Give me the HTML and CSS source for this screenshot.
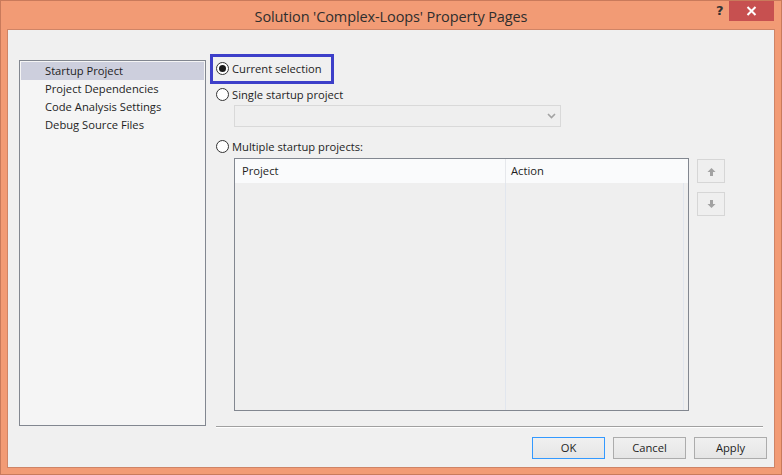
FILE: index.html
```html
<!DOCTYPE html>
<html>
<head>
<meta charset="utf-8">
<link rel="stylesheet" href="styles.css">
</head>
<body>
<div class="window">
  <div class="titlebar">
    <div class="title">Solution 'Complex-Loops' Property Pages</div>
    <div class="help">?</div>
    <div class="close">
      <svg width="11" height="10" viewBox="0 0 11 10"><path d="M1.5 1 L9.5 9 M9.5 1 L1.5 9" stroke="#fff" stroke-width="2"/></svg>
    </div>
  </div>
  <div class="client">
    <div class="listbox">
      <div class="item selected">Startup Project</div>
      <div class="item">Project Dependencies</div>
      <div class="item">Code Analysis Settings</div>
      <div class="item">Debug Source Files</div>
    </div>
    <div class="content">
      <div class="option first">
        <span class="radio checked"><span class="dot"></span></span>
        <span class="label">Current selection</span>
        <span class="focusbox"></span>
      </div>
      <div class="option second">
        <span class="radio"></span>
        <span class="label">Single startup project</span>
      </div>
      <div class="combo">
        <svg class="chev" width="9" height="6" viewBox="0 0 9 6"><path d="M1 1 L4.5 4.5 L8 1" fill="none" stroke="#a3a3a3" stroke-width="1.6"/></svg>
      </div>
      <div class="option third">
        <span class="radio"></span>
        <span class="label">Multiple startup projects:</span>
      </div>
      <div class="gridrow">
        <div class="grid">
          <div class="ghead">
            <div class="gcol c1">Project</div>
            <div class="gcol c2">Action</div>
          </div>
          <div class="gbody">
            <div class="bcol b1"></div>
            <div class="bcol b2"></div>
          </div>
        </div>
        <div class="movers">
          <div class="mbtn">
            <svg width="9" height="9" viewBox="0 0 9 9"><path d="M4.5 1 L8.5 5 L6 5 L6 9 L3 9 L3 5 L0.5 5 Z" fill="#a2a2a2"/></svg>
          </div>
          <div class="mbtn">
            <svg width="9" height="9" viewBox="0 0 9 9"><path d="M4.5 8 L8.5 4 L6 4 L6 0 L3 0 L3 4 L0.5 4 Z" fill="#a2a2a2"/></svg>
          </div>
        </div>
      </div>
      <div class="separator"></div>
      <div class="buttons">
        <div class="btn default">OK</div>
        <div class="btn">Cancel</div>
        <div class="btn">Apply</div>
      </div>
    </div>
  </div>
</div>
</body>
</html>
```
FILE: styles.css
```css
html, body {
  margin: 0;
  padding: 0;
}
body {
  width: 782px;
  height: 475px;
  overflow: hidden;
  font-family: "Open Sans", "Noto Sans", sans-serif;
  font-size: 11.2px;
  color: #1e1e1e;
}
.window {
  box-sizing: border-box;
  width: 782px;
  height: 475px;
  background: #f29b75;
  border: 1px solid #c97a5b;
  padding: 0 6px 6px 6px;
  display: flex;
  flex-direction: column;
}
.titlebar {
  height: 28px;
  position: relative;
  display: flex;
  align-items: center;
  justify-content: center;
}
.title {
  font-size: 14.5px;
  color: #2e2e2e;
  margin-top: 2px;
  letter-spacing: -0.1px;
}
.help {
  position: absolute;
  left: 709px;
  top: 2px;
  font-family: "DejaVu Sans", sans-serif;
  font-weight: bold;
  font-size: 13px;
  color: #333;
}
.close {
  position: absolute;
  left: 722px;
  top: 0;
  width: 45px;
  height: 20px;
  background: #c75050;
  display: flex;
  align-items: center;
  justify-content: center;
}
.close svg { display: block; }
.client {
  flex: 1;
  background: #f0f0f0;
  border: 1px solid #cf8466;
  display: flex;
  padding: 30px 0 0 11px;
}
.listbox {
  box-sizing: border-box;
  width: 187px;
  height: 366px;
  border: 1px solid #828790;
  background: #f5f5f5;
  padding: 1px;
}
.item {
  height: 18px;
  line-height: 18px;
  padding-left: 24px;
}
.item.selected {
  background: #cdcfdd;
}
.content {
  width: 547px;
  margin-left: 10px;
  display: flex;
  flex-direction: column;
}
.option {
  height: 18px;
  display: flex;
  align-items: center;
  position: relative;
}
.option.first { margin-top: -1px; }
.option.second { margin-top: 8px; }
.option.third { margin-top: 10px; }
.radio {
  box-sizing: border-box;
  width: 13px;
  height: 13px;
  border-radius: 50%;
  border: 1px solid #333;
  background: #fff;
  margin-right: 3px;
  display: flex;
  align-items: center;
  justify-content: center;
}
.dot {
  width: 7px;
  height: 7px;
  border-radius: 50%;
  background: #1b1b1b;
}
.focusbox {
  position: absolute;
  left: -6px;
  top: -5px;
  width: 124px;
  height: 30px;
  box-sizing: border-box;
  border: 3px solid #3d3fc9;
}
.combo {
  box-sizing: border-box;
  margin-top: 2px;
  margin-left: 18px;
  width: 327px;
  height: 22px;
  border: 1px solid #d9d9d9;
  background: #efefef;
  display: flex;
  align-items: center;
  justify-content: flex-end;
  padding-right: 4px;
}
.chev { display: block; }
.gridrow {
  display: flex;
  margin-top: 3px;
  margin-left: 18px;
}
.grid {
  box-sizing: border-box;
  width: 455px;
  height: 253px;
  border: 1px solid #828790;
  background: #efefef;
  display: flex;
  flex-direction: column;
}
.ghead {
  height: 24px;
  background: #fafbfc;
  display: flex;
}
.gcol {
  line-height: 24px;
}
.gcol.c1 {
  width: 271px;
  padding-left: 7px;
  box-sizing: border-box;
  border-right: 1px solid #e6e8ec;
}
.gcol.c2 {
  flex: 1;
  padding-left: 5px;
}
.gbody {
  flex: 1;
  display: flex;
}
.bcol.b1 {
  width: 271px;
  box-sizing: border-box;
  border-right: 1px solid #e1e6ee;
}
.bcol.b2 {
  width: 178px;
  box-sizing: border-box;
  border-right: 1px solid #e1e6ee;
}
.movers {
  margin-left: 8px;
  margin-top: 1px;
  display: flex;
  flex-direction: column;
  gap: 9px;
}
.mbtn {
  box-sizing: border-box;
  width: 28px;
  height: 24px;
  border: 1px solid #d6d6d6;
  background: #efefef;
  display: flex;
  align-items: center;
  justify-content: center;
}
.mbtn svg { display: block; }
.separator {
  margin-top: 15px;
  height: 1px;
  background: #a0a0a0;
  border-bottom: 1px solid #ffffff;
}
.buttons {
  margin-top: 9px;
  margin-right: -4px;
  display: flex;
  justify-content: flex-end;
  gap: 8px;
}
.btn {
  box-sizing: border-box;
  width: 73px;
  height: 22px;
  border: 1px solid #acacac;
  background: linear-gradient(#f0f0f0, #e5e5e5);
  text-align: center;
  line-height: 20px;
}
.btn.default {
  border-color: #3399ff;
}
```
